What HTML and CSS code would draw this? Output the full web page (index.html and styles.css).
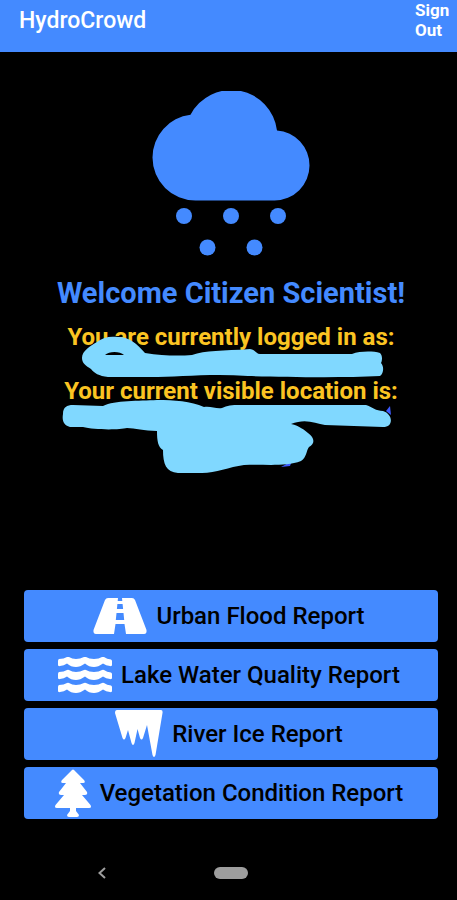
FILE: index.html
```
<!DOCTYPE html>
<html lang="en">
<head>
    <meta charset="UTF-8">
    <meta name="viewport" content="width=device-width, initial-scale=1">
    <title>HydroCrowd</title>
    <link rel="stylesheet" href="styles.css">
</head>
<body>
    <header class="toolbar">
        <h1 class="app-name">HydroCrowd</h1>
        <a class="sign-out" href="#">Sign Out</a>
    </header>

    <main class="content">
        <section class="welcome">
            <svg class="cloud" viewBox="152 91 158 165" aria-hidden="true">
                <path d="M195.500 200.500A43 43 0 0 1 152.500 157.500A43 43 0 0 1 190.500 114.800A46 46 0 0 1 277 130.500A35 35 0 0 1 309.500 165.400A35 35 0 0 1 274.500 200.500Z"/>
                <circle cx="184" cy="216" r="8"/>
                <circle cx="231" cy="216" r="8"/>
                <circle cx="278" cy="216" r="8"/>
                <circle cx="207.500" cy="247.500" r="8"/>
                <circle cx="254.500" cy="247.500" r="8"/>
            </svg>
            <h2 class="greeting">Welcome Citizen Scientist!</h2>
            <div class="account">
                <p class="account-label">You are currently logged in as:</p>
                <p class="account-label">Your current visible location is:</p>
                <!-- hides the user's name and address -->
                <svg class="scribble" viewBox="60 335 342 139" aria-hidden="true">
                    <path fill-rule="evenodd" d="M82 358C82 351 90 346 97 342C103 337 110 336 118 337C130 337 137 344 145 353C163 356 180 356 192 355C205 350 223 351 250 349C256 350 256 354 260 354L352 354C360 351 373 351 380 353C383 356 382 361 381 363C384 366 384 373 380 376C340 378 286 377 248 376C213 373 177 377 150 377L108 377C99 376 94 373 91 369C86 366 82 363 82 358ZM105 355C109 351 120 351 124 355Z"/>
                    <path d="M390 406L391 415L386 411Z" class="ink"/>
                    <path d="M281 467L292 461L290 466Z" class="ink"/>
                    <path d="M63 414C63 407 67 405 73 405L103 406C115 400 139 401 157 400C174 400 191 401 204 407C211 406 216 409 222 408C229 404 239 405 249 405L366 405C372 407 376 411 383 411C393 414 394 427 383 427L325 425C315 423 305 418 291 424C300 426 304 430 308 433C315 438 315 444 309 447C306 451 307 457 301 461C285 467 265 464 244 465C229 467 216 473 202 473L178 473C166 472 163 464 163 450C158 447 157 441 157 431C144 431 135 428 127 428C119 430 94 430 83 427L70 427C63 425 62 420 63 414Z"/>
                </svg>
            </div>
        </section>

        <section class="reports">
            <button class="report" type="button">
                <svg width="54" height="36" viewBox="0 0 54 36" aria-hidden="true">
                    <path fill-rule="evenodd" d="M15 0H25L24.700 3H29.300L29 0H39Q41 0 42 2L53.500 32Q54 36 51 36H33L31.500 26H22.500L21 36H3Q0 36 .5 32L12 2Q13 0 15 0ZM24.400 6L23.900 11H30.100L29.600 6ZM23.500 15L22.800 22H31.200L30.500 15Z"/>
                </svg>
                Urban Flood Report
            </button>
            <button class="report" type="button">
                <svg width="54" height="36" viewBox="0 0 54 36" aria-hidden="true">
                    <path id="wave" d="M1 2Q6 2 9 0Q10 -.5 11 0Q14 2 18 2T26 0Q27 -.5 28 0Q31 2 36 2T44 0Q45 -.5 46 0Q49 2 53 2.500Q54 3 54 4V8Q54 9.500 52 9Q48 8.500 45 6.500Q40 10 36 10Q31 10 27 6.500Q22 10 18 10Q13 10 9 6.500Q6 8.500 2 9Q0 9.500 0 8V4Q0 2.500 1 2Z"/>
                    <use href="#wave" y="13"/>
                    <use href="#wave" y="26"/>
                </svg>
                Lake Water Quality Report
            </button>
            <button class="report" type="button">
                <svg width="48" height="48" viewBox="0 0 48 48" aria-hidden="true">
                    <path d="M2 0H46Q48 0 47.500 3L40.500 45Q39 49 37.500 45L32 15L28 28Q26.500 31 25 28L22.500 19L19.500 33Q18 37 16.500 33L13 20L10.500 28Q9 31 7.500 28L0 3Q0 0 2 0Z"/>
                </svg>
                River Ice Report
            </button>
            <button class="report" type="button">
                <svg width="36" height="48" viewBox="0 0 36 48" aria-hidden="true">
                    <path d="M17 1Q18 0 19 1L29 11Q31 14 28 14H25L32 23Q33 26 30 26H27L35.500 36Q37 39 34 39H21V42L24 46Q24 48 22 48H14Q12 48 12 46L15 42V39H2Q-1 39 .5 36L9 26H6Q3 26 4 23L11 14H8Q5 14 7 11Z"/>
                </svg>
                Vegetation Condition Report
            </button>
        </section>
    </main>

    <nav class="system-nav">
        <button class="nav-back" type="button" aria-label="Back">
            <svg width="8" height="12" viewBox="0 0 8 12" aria-hidden="true">
                <path d="M7 1L1.500 6L7 11"/>
            </svg>
        </button>
        <button class="nav-home" type="button" aria-label="Home"></button>
    </nav>
</body>
</html>
```
FILE: styles.css
```
body {
    font-family: Roboto, Arial, sans-serif;
    background-color: #000;
    display: flex;
    flex-direction: column;
    min-height: 100vh;
    margin: 0;
}
.toolbar {
    background-color: #448aff;
    color: #fff;
    display: flex;
    align-items: flex-start;
    justify-content: space-between;
    height: 52px;
    padding: 0 6px 0 19px;
}
.app-name {
    font-size: 23px;
    font-weight: 500;
    line-height: 42px;
    margin: 0;
}
.sign-out {
    color: #fff;
    font-size: 17px;
    font-weight: 700;
    line-height: 20px;
    text-decoration: none;
    width: 36px;
}
.content {
    display: flex;
    flex-direction: column;
    flex: 1;
    justify-content: space-between;
    padding: 39px 19px 0 24px;
}
.welcome {
    display: flex;
    flex-direction: column;
    align-items: center;
    text-align: center;
}
.cloud {
    fill: #448aff;
    width: 158px;
    height: 165px;
}
.greeting {
    color: #448aff;
    font-size: 29px;
    font-weight: 700;
    line-height: 36px;
    margin: 19px 0 0;
    white-space: nowrap;
}
.account {
    display: flex;
    flex-direction: column;
    gap: 26px;
    margin-top: 12px;
    position: relative;
}
.account-label {
    color: #fbc422;
    font-size: 24px;
    font-weight: 700;
    line-height: 28px;
    margin: 0;
    white-space: nowrap;
}
/* drawn over the account text */
.scribble {
    fill: #80d8ff;
    position: absolute;
    top: 12px;
    left: 50%;
    width: 342px;
    height: 139px;
    transform: translateX(-50%);
}
.ink {
    fill: #3d5afe;
}
.reports {
    display: flex;
    flex-direction: column;
    gap: 7px;
}
.report {
    background-color: #448aff;
    border: none;
    border-radius: 4px;
    color: #000;
    cursor: pointer;
    display: flex;
    align-items: center;
    justify-content: center;
    gap: 9px;
    font-family: inherit;
    font-size: 24px;
    font-weight: 500;
    height: 52px;
    padding: 0 4px 0 0;
    white-space: nowrap;
}
.report:hover {
    background-color: #2979ff;
}
.report svg {
    fill: #fff;
    flex-shrink: 0;
}
.system-nav {
    display: grid;
    grid-template-columns: 1fr auto 1fr;
    align-items: center;
    box-sizing: border-box;
    height: 81px;
    padding: 27px 0 0 5px;
}
.nav-back {
    background: none;
    border: none;
    cursor: pointer;
    display: flex;
    justify-self: center;
    padding: 12px 28px 12px 12px;
}
.nav-back svg {
    fill: none;
    stroke: #9e9e9e;
    stroke-width: 2;
}
.nav-home {
    background-color: #9e9e9e;
    border: none;
    border-radius: 6px;
    cursor: pointer;
    width: 34px;
    height: 12px;
    padding: 0;
}
```
